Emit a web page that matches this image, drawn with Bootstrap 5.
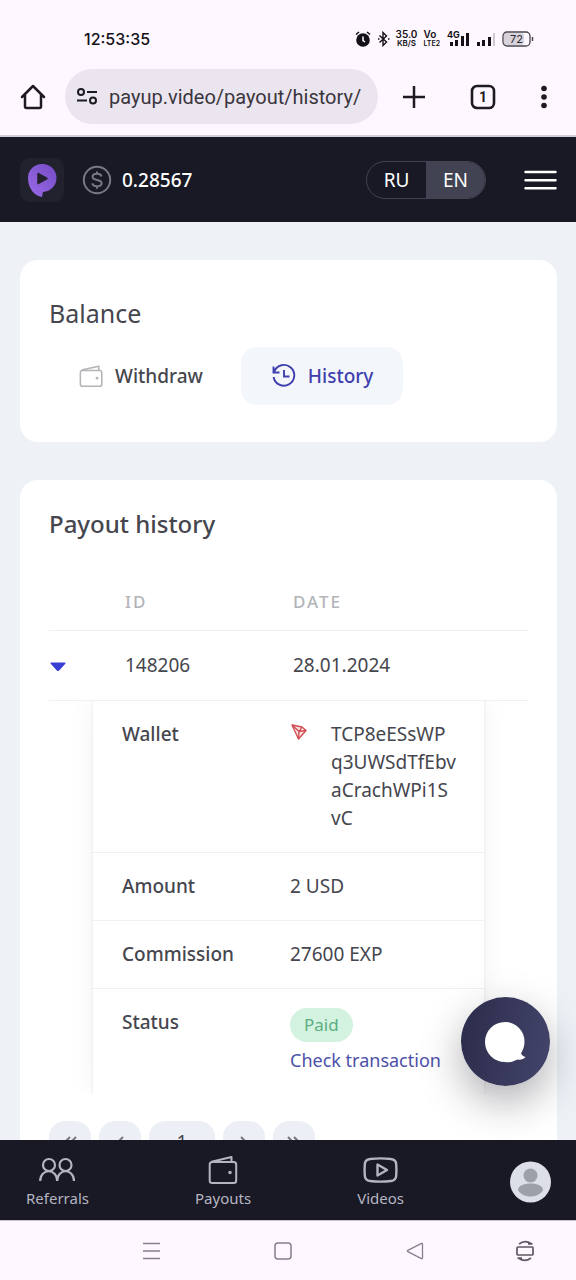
<!DOCTYPE html>
<html lang="en">
<head>
<meta charset="utf-8">
<meta name="viewport" content="width=device-width, initial-scale=1">
<title>Payout history</title>
<link href="https://cdn.jsdelivr.net/npm/bootstrap@5.3.0/dist/css/bootstrap.min.css" rel="stylesheet">
<style>
  :root { --ink: #45464e; --night: #191925; --brand: #3f3fae; --chrome: #fef7ff; --line: #f0f0f2; }
  body { font-family: "Noto Sans", "Open Sans", sans-serif; font-size: 19px; line-height: 28px; color: var(--ink); background: var(--chrome); }
  svg { display: block; flex: none; }
  button, a { color: inherit; }
  .plain { border: 0; background: none; padding: 0; }

  /* phone status bar */
  .status-bar { height: 69px; padding: 8px 42px 0 84px; color: #141218; }
  .clock { font: 500 16px/24px Inter, sans-serif; }
  .status-icons { gap: 6px; }
  .tiny-stack { font: 600 10px/9px Inter, sans-serif; text-align: center; }
  .tiny-stack small { display: block; font-size: 8px; line-height: 9px; }
  .tiny-stack.volte small { font-size: 7px; }

  /* browser toolbar */
  .toolbar { padding: 0 28px 11px 20px; border-bottom: 2px solid #d3cdd6; color: #1d1b20; }
  .toolbar-actions { gap: 44px; }
  .address { height: 55px; border-radius: 28px; background: #ebe5ef; padding: 0 12px; margin: 0 24px 0 19px; min-width: 0; }
  .address input { font: 20px/28px Roboto, sans-serif; color: #3a363e; border: 0; background: none; padding: 0; min-width: 0; outline: 0; }

  /* site header */
  .site-header { height: 85px; padding: 0 19px 0 20px; background: var(--night); color: #fff; }
  .logo { width: 44px; height: 44px; border-radius: 10px; background: #22222e; }
  .fw-500 { font-weight: 500; }
  .lang { border: 1px solid #42434f; border-radius: 19px; overflow: hidden; height: 38px; margin-right: 38px; }
  .lang button { width: 59px; }
  .lang .on { background: #414353; }

  .content { background: #eef2f7; padding: 38px 19px 38px 20px; scrollbar-width: none; }
  .content::-webkit-scrollbar { display: none; }
  .panel { background: #fff; border-radius: 18px; padding: 28px 29px; }
  .panel + .panel { margin-top: 38px; }
  .panel h1, .panel h2 { line-height: 32px; margin: 0; color: var(--ink); }
  .panel h1 { font-size: 25px; font-weight: 400; padding-top: 9px; }
  .panel h2 { font-size: 24px; font-weight: 500; }
  .tabs { gap: 8px; margin: 18px 0 9px; }
  .tab-link { height: 58px; padding: 0 30px; border-radius: 16px; gap: 11px; font-weight: 500; text-decoration: none; }
  .tab-link.on { background: #f3f6fb; color: var(--brand); }

  .history { width: 100%; table-layout: fixed; margin-top: 34px; }
  .history .c-toggle { width: 75px; }
  .history .c-id { width: 168px; }
  .history > thead tr > * { height: 56px; font-size: 17px; font-weight: 500; letter-spacing: 2px; color: #b3b4b9; border-bottom: 1px solid var(--line); }
  .history > tbody > .entry > td { height: 70px; border-bottom: 1px solid var(--line); }
  .detail-clip { overflow: hidden; padding: 0 44px; }
  .detail { width: 100%; table-layout: fixed; box-shadow: 0 0 28px rgba(40, 40, 60, .05), 0 0 3px rgba(40, 40, 60, .1); }
  .detail th { width: 197px; font-weight: 500; padding: 19px 0 20px 29px; vertical-align: top; }
  .detail td { padding: 19px 28px 20px 0; vertical-align: top; }
  .detail tr + tr > * { border-top: 1px solid var(--line); }
  .address-text { word-break: break-all; }
  .paid { display: block; width: fit-content; background: #d3f2e0; color: #5bae81; font-size: 17px; line-height: 34px; padding: 0 14px; border-radius: 17px; }
  .tx { color: #4c50a8; font-size: 18px; line-height: 36px; text-decoration: none; white-space: nowrap; }

  .pager { gap: 8px; margin-top: 27px; }
  .pager button { width: 42px; height: 42px; border-radius: 16px; background: #eceff5; color: #75767f; }
  .pager .current { width: 66px; color: var(--ink); }

  .chat { position: absolute; right: 26px; bottom: 54px; width: 89px; height: 89px; border-radius: 50%; background: linear-gradient(100deg, #2b2b4a, #43456b); box-shadow: 0 16px 40px rgba(30, 30, 40, .35); }

  .site-nav { height: 80px; padding: 4px 25px 0 26px; background: var(--night); color: #b5b5c1; }
  .site-nav a { font-size: 15px; line-height: 20px; text-decoration: none; }
  .system-nav { height: 60px; padding: 0 7px 0 85px; display: grid; grid-template-columns: 3fr 3fr 3fr 2fr; place-items: center; border-top: 1px solid #c9c4cc; color: #85808a; }
</style>
</head>
<body>
<div class="vh-100 d-flex flex-column">

  <div class="status-bar d-flex align-items-center justify-content-between flex-shrink-0">
    <span class="clock">12:53:35</span>
    <div class="status-icons d-flex align-items-center">
      <svg width="16" height="18" viewBox="0 0 16 18"><circle cx="8" cy="10" r="6.8" fill="currentColor"/><path d="M1 4.500 4 2M15 4.500 12 2" stroke="currentColor" stroke-width="1.600"/><path d="M8 6.500v4l2 1.500" fill="none" stroke="#fff" stroke-width="1.500"/></svg>
      <svg width="13" height="16" viewBox="0 0 13 16" fill="none" stroke="currentColor" stroke-width="1.400"><path d="m2.500 4.500 7 6.500-3.500 3.500v-13L9.500 5l-7 6.500"/><path d="M1 8h1.500M11 8h1.500"/></svg>
      <span class="tiny-stack">35.0<small>KB/S</small></span>
      <span class="tiny-stack volte text-start">Vo<small>LTE2</small></span>
      <svg width="24" height="18" viewBox="0 0 24 18" fill="currentColor"><path d="M4 12h3v4H4zM9 10h3v6H9zM15 6h3v10h-3zM20 3h3v13h-3z"/><text x="1" y="8" font-family="Inter" font-size="9" font-weight="700">4G</text></svg>
      <svg width="20" height="18" viewBox="0 0 20 18" fill="currentColor"><path d="M1 12h3v4H1zM6 10h3v6H6zM12 7h3v9h-3z"/><path d="M17 3h2v13h-2z" opacity=".2"/></svg>
      <svg width="32" height="16" viewBox="0 0 32 16"><rect x="2" y="2" width="20" height="12" rx="3" fill="#d8d2da"/><rect x="1" y="1" width="27" height="14" rx="4" fill="none" stroke="#4a474e" stroke-width="1.300"/><path d="M30.500 6v4" stroke="#4a474e" stroke-width="1.500"/><text x="14.500" y="12" text-anchor="middle" font-family="Inter" font-size="11" fill="#2b282f">72</text></svg>
    </div>
  </div>

  <div class="toolbar d-flex align-items-center flex-shrink-0">
    <button class="plain" aria-label="Home"><svg width="26" height="26" viewBox="0 0 26 26" fill="none" stroke="currentColor" stroke-width="2.500" stroke-linejoin="round" stroke-linecap="round"><path d="M2 13 13 2l11 11M5 11v11.500q0 1.500 1.500 1.500h13q1.500 0 1.500-1.500V11"/></svg></button>
    <label class="address d-flex align-items-center flex-grow-1 gap-2">
      <svg class="me-1" width="20" height="19" viewBox="0 0 20 19" fill="none" stroke="#1d1b20" stroke-width="2"><circle cx="4" cy="5" r="3"/><circle cx="16" cy="13.500" r="3"/><path d="M10 5h10M0 13.500h10"/></svg>
      <input class="flex-grow-1" type="text" aria-label="Address" value="payup.video/payout/history/">
    </label>
    <div class="toolbar-actions d-flex align-items-center">
      <button class="plain" aria-label="New tab"><svg width="24" height="24" viewBox="0 0 24 24" stroke="currentColor" stroke-width="2.500"><path d="M12 1v22M1 12h22"/></svg></button>
      <button class="plain" aria-label="Tabs"><svg width="26" height="26" viewBox="0 0 26 26"><rect x="2" y="2" width="22" height="22" rx="5" fill="none" stroke="currentColor" stroke-width="2.600"/><text x="13" y="18" text-anchor="middle" font-family="Roboto" font-size="14" font-weight="700" fill="currentColor">1</text></svg></button>
      <button class="plain" aria-label="Menu"><svg width="8" height="24" viewBox="0 0 8 24" fill="currentColor"><circle cx="4" cy="3.500" r="2.800"/><circle cx="4" cy="12" r="2.800"/><circle cx="4" cy="20.500" r="2.800"/></svg></button>
    </div>
  </div>

  <header class="site-header d-flex align-items-center flex-shrink-0">
    <a class="logo d-flex align-items-center justify-content-center" href="#" aria-label="Home page">
      <svg width="30" height="36" viewBox="0 0 30 36"><defs><linearGradient id="violet" x1="1" y1="0" x2="0" y2="1"><stop offset="0" stop-color="#744bc4"/><stop offset="1" stop-color="#9b6ae8"/></linearGradient></defs><path d="M15 2a14 14 0 0 1 1 28l-1 5C8 34 1 27 1 16A14 14 0 0 1 15 2Z" fill="url(#violet)"/><path d="M11 11.500v10l9-5z" fill="#22222e" stroke="#22222e" stroke-width="1.500" stroke-linejoin="round"/></svg>
    </a>
    <svg class="ms-3" width="34" height="30" viewBox="0 0 34 30" fill="none" stroke="#777884" stroke-width="2"><circle cx="17" cy="15" r="13.200"/><path d="M21.500 11.500c-.5-2-2.200-2.700-4.500-2.700-2.600 0-4.400 1.100-4.400 3s1.500 2.700 4.400 3.200 4.600 1.300 4.600 3.300-2 3-4.600 3c-2.500 0-4.300-.9-4.700-3M17 6.500v2.300M17 21.300v2.500"/></svg>
    <span class="fw-500 ms-2">0.28567</span>
    <div class="lang d-flex ms-auto">
      <button class="plain text-white">RU</button>
      <button class="plain text-white on">EN</button>
    </div>
    <button class="plain" aria-label="Open menu"><svg width="33" height="20" viewBox="0 0 33 20" stroke="#fff" stroke-width="2.500" stroke-linecap="round"><path d="M1.500 2h30M1.500 10.200h30M1.500 18.200h30"/></svg></button>
  </header>

  <div class="position-relative flex-grow-1 overflow-hidden">
    <main class="content h-100 overflow-auto">
      <section class="panel">
        <h1>Balance</h1>
        <nav class="tabs d-flex">
          <a class="tab-link d-flex align-items-center" href="#">
            <svg width="25" height="24" viewBox="0 0 29 28" fill="none" stroke="#b3b3b8" stroke-width="1.800" stroke-linejoin="round"><rect x="1.500" y="7.500" width="25" height="18.500" rx="2.500"/><path d="M3 7 23 2.500V7"/><circle cx="21" cy="16.500" r=".8"/></svg>
            Withdraw
          </a>
          <a class="tab-link on d-flex align-items-center" href="#" aria-current="page">
            <svg width="26" height="26" viewBox="0 0 26 26" fill="none" stroke="currentColor" stroke-width="1.900"><path d="M3.200 8.500A10.400 10.400 0 1 1 2.600 14M2.500 3.500v6h6M13 7v6.500h5.500"/></svg>
            History
          </a>
        </nav>
      </section>

      <section class="panel">
        <h2>Payout history</h2>
        <table class="history">
          <colgroup><col class="c-toggle"><col class="c-id"><col></colgroup>
          <thead><tr><td></td><th scope="col">ID</th><th scope="col">DATE</th></tr></thead>
          <tbody>
            <tr class="entry">
              <td><button class="plain" aria-label="Toggle details" aria-expanded="true"><svg width="16" height="10" viewBox="0 0 16 10"><path d="M1 .5h14q1 .5.300 1.300L9.200 8.500q-1.200 1-2.400 0L.7 1.800Q0 1 1 .5Z" fill="#3a3fd4"/></svg></button></td>
              <td>148206</td>
              <td>28.01.2024</td>
            </tr>
            <tr>
              <td colspan="3" class="p-0">
                <div class="detail-clip">
                  <table class="detail">
                    <tbody>
                      <tr><th scope="row">Wallet</th><td>
                        <div class="d-flex gap-4">
                          <svg class="mt-1" width="17" height="20" viewBox="0 0 17 20" fill="#fae3e3" stroke="#d04a4f" stroke-width="1.300" stroke-linejoin="round"><path d="M2 1 12 3 16 6.500 8.500 15Z"/><path d="m2 1 7 6.500 7-1M9 7.500 8.500 15M9 7.500 12 3" fill="none"/></svg>
                          <span class="address-text">TCP8eESsWPq3UWSdTfEbvaCrachWPi1SvC</span>
                        </div>
                      </td></tr>
                      <tr><th scope="row">Amount</th><td>2 USD</td></tr>
                      <tr><th scope="row">Commission</th><td>27600 EXP</td></tr>
                      <tr><th scope="row">Status</th><td class="pb-3"><span class="paid">Paid</span><a class="tx" href="#">Check transaction</a></td></tr>
                    </tbody>
                  </table>
                </div>
              </td>
            </tr>
          </tbody>
        </table>
        <nav class="pager d-flex" aria-label="Pages">
          <button class="plain" aria-label="First"><svg class="mx-auto" width="14" height="12" viewBox="0 0 14 12" fill="none" stroke="currentColor" stroke-width="2"><path d="M7 1 2 6l5 5M13 1 8 6l5 5"/></svg></button>
          <button class="plain" aria-label="Previous"><svg class="mx-auto" width="8" height="12" viewBox="0 0 8 12" fill="none" stroke="currentColor" stroke-width="2"><path d="M7 1 2 6l5 5"/></svg></button>
          <button class="plain current">1</button>
          <button class="plain" aria-label="Next"><svg class="mx-auto" width="8" height="12" viewBox="0 0 8 12" fill="none" stroke="currentColor" stroke-width="2"><path d="m1 1 5 5-5 5"/></svg></button>
          <button class="plain" aria-label="Last"><svg class="mx-auto" width="14" height="12" viewBox="0 0 14 12" fill="none" stroke="currentColor" stroke-width="2"><path d="m1 1 5 5-5 5M7 1l5 5-5 5"/></svg></button>
        </nav>
      </section>
    </main>

    <button class="chat d-flex align-items-center justify-content-center border-0 p-0" aria-label="Chat">
      <svg width="41" height="42" viewBox="0 0 41 42"><path d="M20 1a19.500 19.500 0 0 1 19.500 19.500c0 5-1.500 8.500-3.500 12 1 2 2.500 3 4.500 3.500-2 2.500-5 3-8 2.500A20 20 0 0 1 20 41 20 20 0 0 1 20 1Z" fill="#fff"/></svg>
    </button>
  </div>

  <nav class="site-nav d-flex align-items-center justify-content-between flex-shrink-0">
    <a class="d-flex flex-column align-items-center gap-1" href="#">
      <svg width="36" height="28" viewBox="0 0 36 28" fill="none" stroke="currentColor" stroke-width="2.200"><circle cx="10" cy="9" r="6"/><circle cx="26.500" cy="9" r="6"/><path d="M1.200 25C1.200 12 18.200 12 18.200 25 18.200 12 35 12 35 25"/></svg>
      Referrals
    </a>
    <a class="d-flex flex-column align-items-center gap-1" href="#">
      <svg width="30" height="28" viewBox="0 0 29 28" fill="none" stroke="currentColor" stroke-width="2" stroke-linejoin="round"><rect x="1.200" y="6" width="26.500" height="21" rx="2.500"/><path d="M3 5.800 23 1v5"/><circle cx="21.500" cy="16.500" r=".8"/></svg>
      Payouts
    </a>
    <a class="d-flex flex-column align-items-center gap-1" href="#">
      <svg width="35" height="28" viewBox="0 0 35 28" fill="none" stroke="currentColor" stroke-width="2.400" stroke-linejoin="round"><path d="M7 3q10.500-1.300 21 0 5 .5 5.200 5.500.5 5.500 0 11Q33 24.500 28 25 17.500 26.300 7 25 2 24.500 1.800 19.500q-.5-5.500 0-11Q2 3.500 7 3Z"/><path d="M14.500 8.500v11l9.500-5.500z"/></svg>
      Videos
    </a>
    <a href="#" aria-label="Profile">
      <svg width="41" height="42" viewBox="0 0 41 42"><circle cx="20.500" cy="21" r="20.500" fill="#dcdfe8"/><circle cx="20.500" cy="14.500" r="7" fill="#9da0a8"/><path d="M8 29c0-4 5.500-6.500 12.500-6.500S33 25 33 29c-2 4-7 6.500-12.500 6.500S10 33 8 29Z" fill="#9da0a8"/></svg>
    </a>
  </nav>

  <div class="system-nav flex-shrink-0">
    <button class="plain" aria-label="Recent apps"><svg width="18" height="18" viewBox="0 0 18 18" stroke="currentColor" stroke-width="1.400"><path d="M1 1.500h17M1 9h17M1 16.500h17"/></svg></button>
    <button class="plain" aria-label="Home screen"><svg width="18" height="18" viewBox="0 0 18 18" fill="none" stroke="currentColor" stroke-width="1.500"><rect x="1" y="1" width="16" height="16" rx="3"/></svg></button>
    <button class="plain" aria-label="Back"><svg width="18" height="18" viewBox="0 0 18 18" fill="none" stroke="currentColor" stroke-width="1.300" stroke-linejoin="round"><path d="M16.500 2v14q0 1-1 .600L1.800 9.600q-1-.6 0-1.200L15.500 1.400q1-.4 1 .6Z"/></svg></button>
    <button class="plain" aria-label="Rotate screen"><svg width="18" height="22" viewBox="0 0 18 22" fill="none" stroke="#5d5862" stroke-width="1.700"><rect x="1" y="7" width="16" height="8" rx="1"/><path d="M3 4Q9-.5 15 3.500M12 3.800h4.500M15 18q-6 4.500-12 .5M6 18.200H1.500"/></svg></button>
  </div>
</div>
<script src="https://cdn.jsdelivr.net/npm/bootstrap@5.3.0/dist/js/bootstrap.bundle.min.js"></script>
</body>
</html>
